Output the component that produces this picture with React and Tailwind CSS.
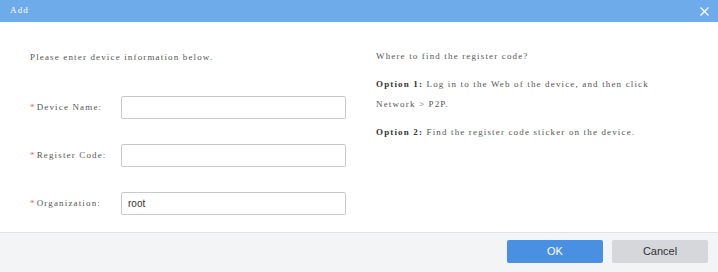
import React, { useState } from "react";

const serif = { fontFamily: '"Liberation Serif", "DejaVu Serif", serif', letterSpacing: "1.15px" };

const Field = ({ label, value, onChange }) => (
  <div className="flex items-center h-[23px]">
    <div className="w-[91px] shrink-0 flex items-center text-[9px] text-[#555]">
      <span className="text-[#f06060] mr-[1px]">*</span>
      <span>{label}</span>
    </div>
    <input
      value={value}
      onChange={(e) => onChange(e.target.value)}
      className="w-[225px] h-[23px] border border-[#c9c9c9] rounded-[2px] px-[6px] text-[10px] text-[#333] outline-none"
      style={{ fontFamily: '"Liberation Sans", Arial, sans-serif', letterSpacing: 0 }}
    />
  </div>
);

export default function App() {
  const [name, setName] = useState("");
  const [code, setCode] = useState("");
  const [org, setOrg] = useState("root");

  return (
    <div className="w-[718px] h-[272px] flex flex-col bg-white" style={serif}>
      {/* Title bar */}
      <div className="h-[22px] bg-[#6eabea] flex items-center justify-between pl-[10px] pr-[9px]">
        <span className="text-white text-[9px]">Add</span>
        <svg width="9" height="9" viewBox="0 0 9 9">
          <path d="M0.5 0.5 L8.5 8.5 M8.5 0.5 L0.5 8.5" stroke="#fff" strokeWidth="1.3" />
        </svg>
      </div>

      {/* Body */}
      <div className="h-[210px] flex pl-[30px]">
        <div className="w-[346px] shrink-0">
          <p className="mt-[29px] h-[12px] leading-[12px] text-[9px] text-[#555]">
            Please enter device information below.
          </p>
          <div className="mt-[33px] flex flex-col gap-[25px]">
            <Field label="Device Name:" value={name} onChange={setName} />
            <Field label="Register Code:" value={code} onChange={setCode} />
            <Field label="Organization:" value={org} onChange={setOrg} />
          </div>
        </div>
        <div className="text-[9px] text-[#555]">
          <p className="mt-[28px] leading-[12px]">Where to find the register code?</p>
          <p className="mt-[12px] leading-[20px]">
            <span className="font-bold text-[#333]">Option 1:</span> Log in to the Web of the device, and then click
            <br />
            Network &gt; P2P.
          </p>
          <p className="mt-[12px] leading-[12px]">
            <span className="font-bold text-[#333]">Option 2:</span> Find the register code sticker on the device.
          </p>
        </div>
      </div>

      {/* Footer */}
      <div
        className="flex-1 bg-[#f3f4f6] border-t border-[#dfe1e4] flex items-center justify-end gap-[9px] pr-[10px] pb-[2px]"
        style={{ fontFamily: '"Liberation Sans", Arial, sans-serif', letterSpacing: 0 }}
      >
        <button className="w-[96px] h-[23px] rounded-[2px] bg-[#4a90e2] text-white text-[11px]">OK</button>
        <button className="w-[96px] h-[23px] rounded-[2px] bg-[#d5d7db] text-[#333] text-[11px]">Cancel</button>
      </div>
    </div>
  );
}
